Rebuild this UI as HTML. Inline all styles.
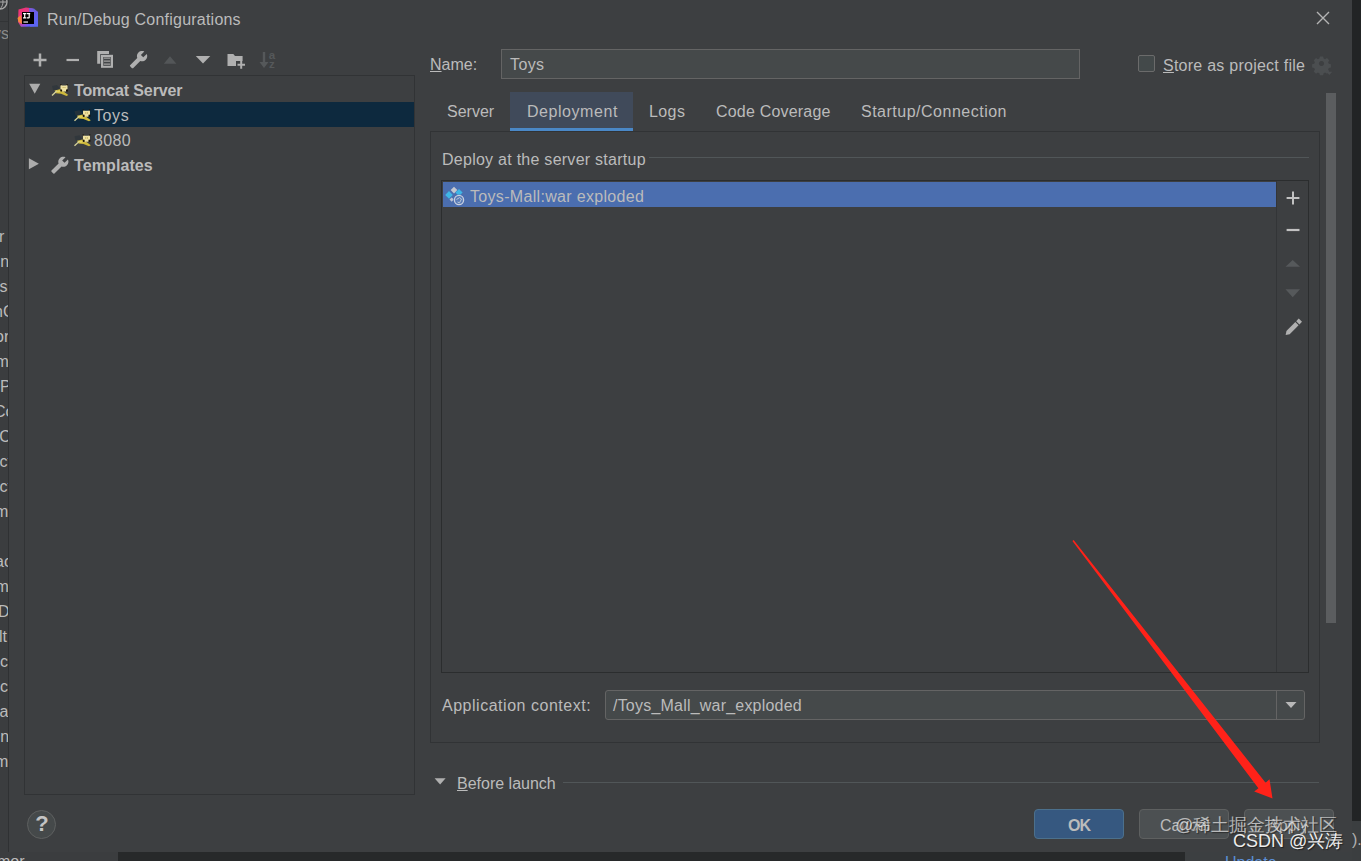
<!DOCTYPE html>
<html><head><meta charset="utf-8">
<style>
html,body{margin:0;padding:0;width:1361px;height:861px;overflow:hidden;background:#27292a;}
body{position:relative;font-family:"Liberation Sans",sans-serif;color:#bbbbbb;}
.a{position:absolute;}
.t{position:absolute;white-space:pre;font-size:16px;line-height:16px;}
.b{font-weight:bold;}
u{text-decoration:underline;text-underline-offset:0.5px;text-decoration-thickness:1px;}
svg{position:absolute;overflow:visible;}
</style></head><body>
<!-- background strips -->
<div class="a" style="left:0;top:0;width:9px;height:852px;background:#3b3d3f;"></div>
<div class="a" style="left:1352px;top:0;width:9px;height:861px;background:#222425;"></div>
<div class="a" style="left:0;top:852px;width:118px;height:9px;background:#3b3d3f;"></div>
<div class="a" style="left:1185px;top:852px;width:176px;height:9px;background:#3c3f41;"></div>

<!-- dialog -->
<div class="a" id="dlg" style="left:9px;top:0;width:1343px;height:852px;background:#3d3f41;"></div>

<!-- title -->
<div class="t" style="left:47px;top:12px;letter-spacing:0.22px;">Run/Debug Configurations</div>

<!-- tree panel -->
<div class="a" style="left:24px;top:75px;width:389px;height:718px;border:1px solid #313335;"></div>
<div class="a" style="left:25px;top:102px;width:389px;height:25px;background:#0d293e;"></div>
<div class="t b" style="left:74px;top:83px;letter-spacing:-0.12px;">Tomcat Server</div>
<div class="t" style="left:94px;top:108px;letter-spacing:0.6px;">Toys</div>
<div class="t" style="left:94px;top:133px;letter-spacing:0.35px;">8080</div>
<div class="t b" style="left:74px;top:158px;letter-spacing:0.1px;">Templates</div>

<!-- name -->
<div class="t" style="left:430px;top:57px;"><u>N</u>ame:</div>
<div class="a" style="left:501px;top:49px;width:577px;height:28px;background:#45494a;border:1px solid #646464;"></div>
<div class="t" style="left:510px;top:57px;letter-spacing:0.4px;">Toys</div>

<div class="a" style="left:1138px;top:55px;width:15px;height:15px;background:#43494a;border:1px solid #6b6b6b;border-radius:2px;"></div>
<div class="t" style="left:1163px;top:58px;letter-spacing:0.25px;"><u>S</u>tore as project file</div>

<!-- tabs -->
<div class="a" style="left:510px;top:92px;width:123px;height:39px;background:#404a5a;"></div>
<div class="a" style="left:510px;top:128px;width:123px;height:3px;background:#4a88c7;"></div>
<div class="t" style="left:447px;top:104px;">Server</div>
<div class="t" style="left:527px;top:104px;letter-spacing:0.55px;">Deployment</div>
<div class="t" style="left:649px;top:104px;letter-spacing:0.4px;">Logs</div>
<div class="t" style="left:716px;top:104px;letter-spacing:0.2px;">Code Coverage</div>
<div class="t" style="left:861px;top:104px;letter-spacing:0.5px;">Startup/Connection</div>

<!-- tab panel -->
<div class="a" style="left:430px;top:131px;width:888px;height:610px;border:1px solid #313335;"></div>
<div class="t" style="left:442px;top:152px;letter-spacing:0.26px;">Deploy at the server startup</div>
<div class="a" style="left:649px;top:157px;width:660px;height:1px;background:#515658;"></div>

<!-- list -->
<div class="a" style="left:441px;top:180px;width:866px;height:491px;border:1px solid #2b2d2e;"></div>
<div class="a" style="left:1276px;top:181px;width:1px;height:491px;background:#333537;"></div>
<div class="a" style="left:443px;top:182px;width:833px;height:25px;background:#4b6eaf;"></div>
<div class="t" style="left:470px;top:189px;letter-spacing:0.32px;">Toys-Mall:war exploded</div>

<!-- app context -->
<div class="t" style="left:442px;top:698px;letter-spacing:0.52px;">Application context:</div>
<div class="a" style="left:605px;top:690px;width:698px;height:28px;background:#45494a;border:1px solid #646464;border-radius:3px;"></div>
<div class="a" style="left:1276px;top:691px;width:1px;height:28px;background:#646464;"></div>
<div class="t" style="left:613px;top:698px;letter-spacing:0.21px;">/Toys_Mall_war_exploded</div>

<!-- before launch -->
<div class="t" style="left:457px;top:776px;"><u>B</u>efore launch</div>
<div class="a" style="left:563px;top:782px;width:756px;height:1px;background:#515658;"></div>

<!-- scrollbar -->
<div class="a" style="left:1326px;top:93px;width:10px;height:530px;background:#5b5d5f;"></div>

<!-- buttons -->
<div class="a" style="left:1034px;top:809px;width:88px;height:28px;background:#365880;border:1px solid #4c708c;border-radius:4px;"></div>
<div class="t b" style="left:1068px;top:818px;letter-spacing:-1px;">OK</div>
<div class="a" style="left:1139px;top:809px;width:88px;height:28px;background:#4c5052;border:1px solid #5e6060;border-radius:4px;"></div>
<div class="t" style="left:1160px;top:818px;">Cancel</div>
<div class="a" style="left:1244px;top:809px;width:88px;height:28px;background:#4c5052;border:1px solid #5e6060;border-radius:4px;"></div>
<div class="t" style="left:1268px;top:818px;">Apply</div>

<!-- help -->
<div class="a" style="left:27px;top:810px;width:27px;height:27px;background:#45494a;border:1px solid #5e6060;border-radius:50%;"></div>


<svg class="a" style="left:0;top:0;" width="1361" height="861" viewBox="0 0 1361 861">
<defs>
 <linearGradient id="ijg" x1="0" y1="0" x2="1" y2="1">
  <stop offset="0" stop-color="#fe2f6a"/><stop offset="0.45" stop-color="#d43d8f"/><stop offset="0.7" stop-color="#6b57ff"/><stop offset="1" stop-color="#3b7cf0"/>
 </linearGradient>
 <linearGradient id="ijo" x1="0" y1="0" x2="0" y2="1">
  <stop offset="0" stop-color="#f04070"/><stop offset="1" stop-color="#f7893a"/>
 </linearGradient>
</defs>
<!-- IJ logo -->
<path d="M18.5 9.5 L26 7.6 L32 8.2 L38 12 L38 26.5 L21 26.8 L18 22 Z" fill="url(#ijg)"/>
<path d="M17.5 18 L21 15 L22 24 L18.5 22 Z" fill="#f7893a"/>
<path d="M29 8 L34 8.5 L38 12 L38 26.5 L30 26.8 Z" fill="#5f63f0" opacity="0.85"/>
<rect x="22" y="12" width="12" height="12" fill="#000"/>
<path d="M23 13 H26.4 V14.2 H25.3 V17.3 H26.4 V18.5 H23 V17.3 H24.1 V14.2 H23 Z M27 13 H30.2 V14.2 H29.8 V17.6 Q29.8 18.5 28.9 18.5 H27 V17.3 H28.6 V14.2 H27 Z" fill="#fff"/>
<rect x="23.4" y="21.4" width="4.6" height="1.3" fill="#ddd"/>

<!-- close -->
<path d="M1317 12 L1329 24 M1329 12 L1317 24" stroke="#b4b4b4" stroke-width="1.4" fill="none"/>

<!-- toolbar -->
<path d="M33.5 60 H46.5 M40 53.5 V66.5" stroke="#b0b0b0" stroke-width="2.5"/>
<path d="M66.5 60 H79" stroke="#b0b0b0" stroke-width="2.2"/>
<path d="M97.2 63.8 V51 H109 V54 H100.3 V63.8 Z" fill="#b0b0b0"/>
<rect x="101" y="54.8" width="12" height="13" fill="#b0b0b0"/>
<rect x="103.3" y="57" width="7.4" height="8.8" fill="#3c3f41"/>
<rect x="103.8" y="57.3" width="6.4" height="1.8" fill="#8a8a8a"/>
<rect x="103.8" y="60.3" width="6.4" height="1.8" fill="#8a8a8a"/>
<rect x="103.8" y="63.3" width="6.4" height="1.8" fill="#8a8a8a"/>
<g transform="translate(148 50.2) scale(-0.79 0.79)"><path d="M22.7 19l-9.1-9.1c.9-2.3.4-5-1.5-6.9-2-2-5-2.4-7.4-1.3L9 6 6 9 1.6 4.7C.4 7.1.9 10.1 2.9 12.1c1.9 1.9 4.6 2.4 6.9 1.5l9.1 9.1c.4.4 1 .4 1.4 0l2.3-2.3c.5-.4.5-1.1.1-1.4z" fill="#b0b0b0"/></g>
<path d="M163.8 63.8 L176.4 63.8 L170 56.2 Z" fill="#535658"/>
<path d="M195.8 56 L210.3 56 L203 63.6 Z" fill="#b0b0b0"/>
<path d="M227.5 54 H233.3 L235 56 H242.6 V61 H236 V66 H227.5 Z" fill="#b0b0b0"/>
<path d="M237.5 64.8 H245 M241.2 61 V68.8" stroke="#b0b0b0" stroke-width="2"/>
<path d="M264 52 V66" stroke="#55585a" stroke-width="2.4"/>
<path d="M259.5 62 L264 68 L268.5 62 Z" fill="#55585a"/>
<text x="268.8" y="58.8" font-family="Liberation Sans" font-weight="bold" font-size="11.5" fill="#55585a">a</text>
<text x="269" y="67.5" font-family="Liberation Sans" font-weight="bold" font-size="11.5" fill="#55585a">z</text>

<!-- tree arrows -->
<path d="M29.2 83.8 L40.3 83.8 L34.7 93.7 Z" fill="#acacac"/>
<path d="M28.9 158.2 L28.9 169.3 L38.9 163.8 Z" fill="#acacac"/>
<g transform="translate(69.2 155.8) scale(-0.78 0.78)"><path d="M22.7 19l-9.1-9.1c.9-2.3.4-5-1.5-6.9-2-2-5-2.4-7.4-1.3L9 6 6 9 1.6 4.7C.4 7.1.9 10.1 2.9 12.1c1.9 1.9 4.6 2.4 6.9 1.5l9.1 9.1c.4.4 1 .4 1.4 0l2.3-2.3c.5-.4.5-1.1.1-1.4z" fill="#afafaf"/></g>

<!-- tomcat icons -->
<g transform="translate(52 84)">
<path d="M0 2 L5 1 L7.5 4 L4.5 7 L1 6 Z" fill="#2c353b" opacity="0.7"/>
<path d="M2.5 6.5 L8 5.3 L11 7 L16.3 11 L14.5 12 L9 9.8 L4 9.2 Z" fill="#cdb83c"/>
<path d="M3.5 7.2 L7.5 6.3 L9.5 7.8 L6 8.6 Z" fill="#e4d35a"/>
<path d="M0 11.5 L5 6.8" stroke="#d8d49a" stroke-width="1.3"/>
<path d="M8.5 0.8 L10 1.5 L14 1.5 L15.5 0.8 L15.5 5 L14 7.5 L10 7.5 L8.5 5 Z" fill="#efe2a2"/>
<path d="M8 0 L9.8 0.3 L8.6 2 Z M14.2 0.3 L16 0 L15.4 2 Z" fill="#221a10"/>
<path d="M8.2 5.5 L10 5.5 L10.2 7.5 L8.4 7.6 Z M14 5.5 L16 5.5 L15.8 7.6 L14 7.5 Z" fill="#1a120a"/>
<path d="M10.6 3.2 h1.1 v0.9 h-1.1 Z M12.4 3.2 h1.1 v0.9 h-1.1 Z" fill="#b09a48"/>
</g>
<g transform="translate(74.5 109.3)">
<path d="M0 2 L5 1 L7.5 4 L4.5 7 L1 6 Z" fill="#2c353b" opacity="0.7"/>
<path d="M2.5 6.5 L8 5.3 L11 7 L16.3 11 L14.5 12 L9 9.8 L4 9.2 Z" fill="#cdb83c"/>
<path d="M3.5 7.2 L7.5 6.3 L9.5 7.8 L6 8.6 Z" fill="#e4d35a"/>
<path d="M0 11.5 L5 6.8" stroke="#d8d49a" stroke-width="1.3"/>
<path d="M8.5 0.8 L10 1.5 L14 1.5 L15.5 0.8 L15.5 5 L14 7.5 L10 7.5 L8.5 5 Z" fill="#efe2a2"/>
<path d="M8 0 L9.8 0.3 L8.6 2 Z M14.2 0.3 L16 0 L15.4 2 Z" fill="#221a10"/>
<path d="M8.2 5.5 L10 5.5 L10.2 7.5 L8.4 7.6 Z M14 5.5 L16 5.5 L15.8 7.6 L14 7.5 Z" fill="#1a120a"/>
<path d="M10.6 3.2 h1.1 v0.9 h-1.1 Z M12.4 3.2 h1.1 v0.9 h-1.1 Z" fill="#b09a48"/>
</g>
<g transform="translate(74.5 134.3)">
<path d="M0 2 L5 1 L7.5 4 L4.5 7 L1 6 Z" fill="#2c353b" opacity="0.7"/>
<path d="M2.5 6.5 L8 5.3 L11 7 L16.3 11 L14.5 12 L9 9.8 L4 9.2 Z" fill="#cdb83c"/>
<path d="M3.5 7.2 L7.5 6.3 L9.5 7.8 L6 8.6 Z" fill="#e4d35a"/>
<path d="M0 11.5 L5 6.8" stroke="#d8d49a" stroke-width="1.3"/>
<path d="M8.5 0.8 L10 1.5 L14 1.5 L15.5 0.8 L15.5 5 L14 7.5 L10 7.5 L8.5 5 Z" fill="#efe2a2"/>
<path d="M8 0 L9.8 0.3 L8.6 2 Z M14.2 0.3 L16 0 L15.4 2 Z" fill="#221a10"/>
<path d="M8.2 5.5 L10 5.5 L10.2 7.5 L8.4 7.6 Z M14 5.5 L16 5.5 L15.8 7.6 L14 7.5 Z" fill="#1a120a"/>
<path d="M10.6 3.2 h1.1 v0.9 h-1.1 Z M12.4 3.2 h1.1 v0.9 h-1.1 Z" fill="#b09a48"/>
</g>
<!-- gear -->
<g transform="translate(1321.5 63.5)" fill="#4b4e50">
<path d="M-1.6 -7 h3.2 l0.5 2.1 l1.5 0.7 l1.9-1.2 l2.3 2.3 l-1.2 1.9 l0.7 1.5 l2.1 0.5 v3.2 l-2.1 0.5 l-0.7 1.5 l1.2 1.9 l-2.3 2.3 l-1.9-1.2 l-1.5 0.7 l-0.5 2.1 h-3.2 l-0.5-2.1 l-1.5-0.7 l-1.9 1.2 l-2.3-2.3 l1.2-1.9 l-0.7-1.5 l-2.1-0.5 v-3.2 l2.1-0.5 l0.7-1.5 l-1.2-1.9 l2.3-2.3 l1.9 1.2 l1.5-0.7 Z M0 -2.6 a2.6 2.6 0 1 0 0.01 0 Z" fill-rule="evenodd"/>
<path d="M4.8 8.2 h6 l-3 3.3 Z"/>
</g>
<!-- artifact icon -->
<path d="M454 186.8 L457.3 190.1 L454 193.4 L450.7 190.1 Z" fill="#c4c7d0"/>
<path d="M449 191.1 L452.8 194.9 L449 198.7 L445.2 194.9 Z" fill="#3fb6e6"/>
<path d="M459 189 L462.6 192.6 L459 196.2 L455.4 192.6 Z" fill="#3fb6e6"/>
<path d="M451.7 197.4 L453.9 199.6 L451.7 201.8 L449.5 199.6 Z" fill="#b8c2d4"/>
<circle cx="459" cy="200" r="5.6" fill="#4b6eaf"/>
<circle cx="459" cy="200" r="4.6" fill="#5a7cb8" stroke="#c8d0e0" stroke-width="1.3"/>
<path d="M456.5 199.5 L459.5 197.6 L461.5 199 L459.5 202.8 L457.5 202" fill="none" stroke="#b8c8d8" stroke-width="1"/>

<!-- right list toolbar -->
<path d="M1286.6 198 H1299.4 M1293 191.6 V204.4" stroke="#c2c2c2" stroke-width="2"/>
<path d="M1286.6 230 H1299.5" stroke="#c2c2c2" stroke-width="2.2"/>
<path d="M1285.5 266.8 H1300 L1292.7 260 Z" fill="#56595b"/>
<path d="M1285.5 289.2 H1300 L1292.7 297.2 Z" fill="#56595b"/>
<g transform="translate(1293 327.6) rotate(-45)" fill="#b0b0b0">
<path d="M-10.4 0 L-7 -2.3 H5.6 V2.3 H-7 Z"/>
<rect x="6.8" y="-2.3" width="3.6" height="4.6"/>
</g>

<!-- dropdown arrow -->
<path d="M1285.5 702 H1296.5 L1291 708 Z" fill="#b8b8b8"/>
<!-- before launch triangle -->
<path d="M434.6 778.2 H445.6 L440.1 784.5 Z" fill="#b0b0b0"/>

<!-- help -->
<text x="42" y="831.4" text-anchor="middle" font-family="Liberation Sans" font-weight="bold" font-size="22" fill="#c4c4c4">?</text>

<!-- red arrow -->
<polygon points="1073.6,540.1 1265.6,782.7 1269.5,779.3 1272.5,798.4 1254.2,791.6 1258.4,788.3 1072.4,540.9" fill="#ff2219"/>

</svg>

<!-- left strip texts -->
<div class="a" style="left:0;top:0;width:9px;height:852px;overflow:hidden;">
<div class="a" style="left:-4px;top:21px;width:13px;height:1px;background:#323436;"></div>
<svg style="left:-10px;top:-8px;" width="20" height="20"><circle cx="10" cy="10" r="7" fill="none" stroke="#a8a8a8" stroke-width="1.3"/><path d="M3 10 H17 M10 3 C6 7 6 13 10 17 M10 3 C14 7 14 13 10 17" stroke="#a8a8a8" stroke-width="1" fill="none"/></svg>
<div class="t" style="left:-7px;top:26px;color:#8a8a8a;">ys</div>
<div class="t" style="left:-1px;top:229px;">r</div>
<div class="t" style="left:0.3px;top:254px;">n</div>
<div class="t" style="left:-0.5px;top:279px;">s</div>
<div class="t" style="left:-5.9px;top:304px;">nC</div>
<div class="t" style="left:-4.9px;top:329px;">or</div>
<div class="t" style="left:-4.5px;top:354px;">m</div>
<div class="t" style="left:0px;top:379px;">P</div>
<div class="t" style="left:-6px;top:404px;">Co</div>
<div class="t" style="left:-0.8px;top:429px;">C</div>
<div class="t" style="left:-0.5px;top:454px;">ct</div>
<div class="t" style="left:-0.5px;top:479px;">ct</div>
<div class="t" style="left:-5px;top:504px;">m</div>
<div class="t" style="left:-4.9px;top:554px;">ac</div>
<div class="t" style="left:-4.5px;top:579px;">m</div>
<div class="t" style="left:-2px;top:604px;">D</div>
<div class="t" style="left:-1.1px;top:629px;">lt</div>
<div class="t" style="left:0px;top:654px;">ct</div>
<div class="t" style="left:0px;top:679px;">ct</div>
<div class="t" style="left:-0.5px;top:704px;">a</div>
<div class="t" style="left:0.3px;top:729px;">n</div>
<div class="t" style="left:-5px;top:754px;">m</div>
</div>
<div class="a" style="left:8px;top:0;width:1px;height:852px;background:#2f3133;"></div>
<!-- bottom strip -->
<div class="a" style="left:0;top:852px;width:118px;height:9px;overflow:hidden;">
<div class="t" style="left:-3px;top:2px;">mor</div>
</div>
<div class="a" style="left:1185px;top:852px;width:167px;height:9px;overflow:hidden;">
<div class="t" style="left:40px;top:3px;color:#5a8fd8;">Update</div>
</div>
<div class="a" style="left:1352px;top:821px;width:9px;height:40px;background:#3b3e40;overflow:hidden;">
<div class="t" style="left:0px;top:11px;color:#b0b0b0;">).</div>
</div>
<!-- watermark -->
<div class="t" style="left:1175px;top:815px;font-size:18px;line-height:20px;color:#e2e2e2;text-shadow:1px 1px 1px #202020;opacity:0.72;font-weight:300;">@稀土掘金技术社区</div>
<div class="t" style="left:1233px;top:831px;font-size:18px;line-height:20px;color:#ececec;text-shadow:1px 1px 1px #202020;font-weight:300;">CSDN @兴涛</div>
</body></html>
